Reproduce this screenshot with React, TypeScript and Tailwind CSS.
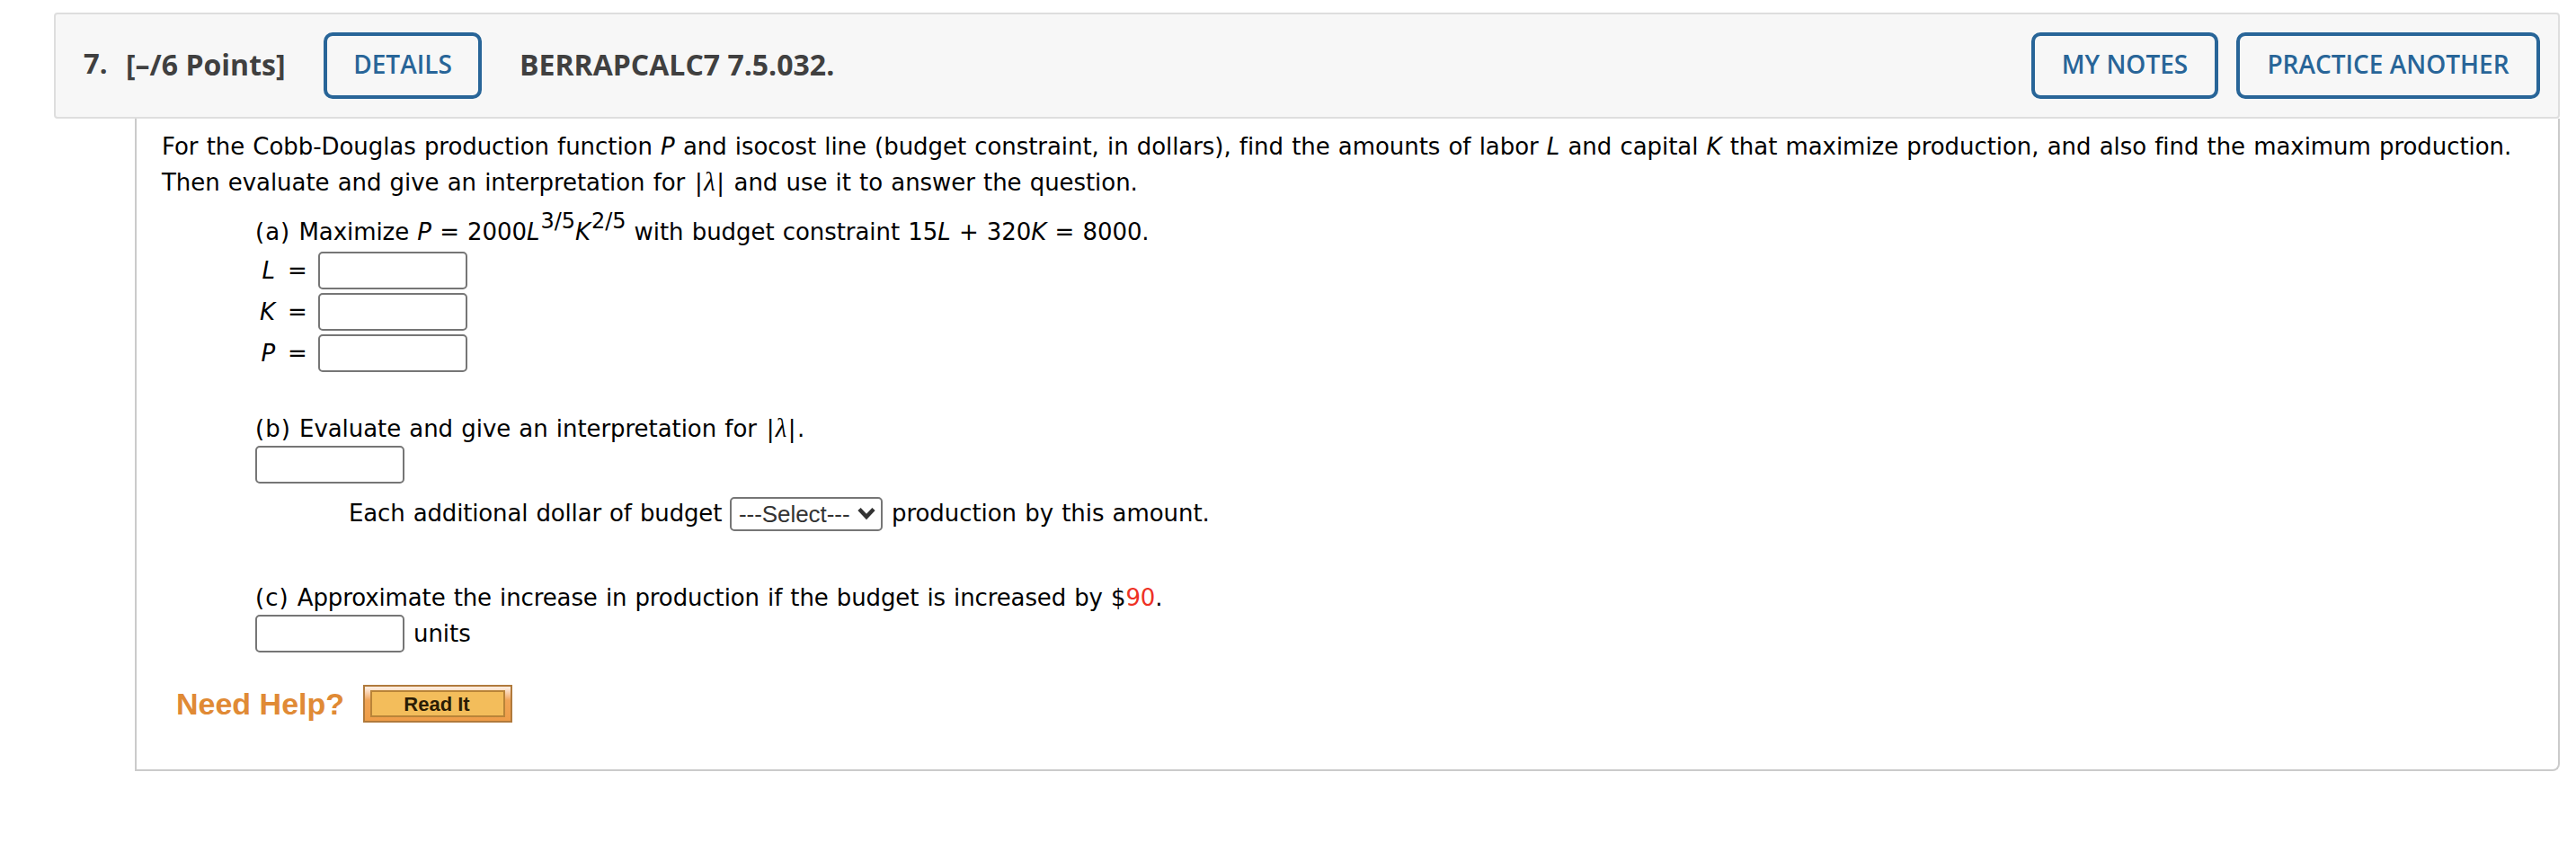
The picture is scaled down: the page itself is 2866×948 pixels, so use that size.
import { type FC, type ReactNode } from "react";

const HeaderButton: FC<{ label: string; className: string }> = ({
  label,
  className,
}) => {
  return (
    <button
      className={`flex h-[74px] items-center justify-center rounded-[10px] border-4 border-[#286598] pb-1 text-[28px] font-semibold whitespace-nowrap text-[#286598] ${className}`}
    >
      {label}
    </button>
  );
};

const AnswerBox: FC<{ label: string }> = ({ label }) => {
  return (
    <input
      aria-label={label}
      className="h-[42px] w-[166px] shrink-0 rounded-[5px] border-2 border-[#767676] bg-white px-1"
    />
  );
};

const PartLabel: FC<{ letter: string }> = ({ letter }) => (
  <span className="tracking-[1px]">({letter})</span>
);

const Lambda = () => (
  <>
    <span className="mx-[1.5px]">|</span>
    <i className="font-['Liberation_Serif',serif] text-[29px] leading-none">
      λ
    </i>
    <span className="mx-[1.5px]">|</span>
  </>
);

const Sup: FC<{ children: ReactNode }> = ({ children }) => (
  <span className="relative -top-[13px] ml-px text-[24px] leading-none">
    {children}
  </span>
);

const variables = ["L", "K", "P"];

const Header = () => {
  return (
    <div className="flex h-[118px] items-center rounded-[4px] border-2 border-[#dedede] bg-[#f7f7f7] pr-5 pl-[31px] font-['Open_Sans',sans-serif] text-[32px] font-bold text-[#404040]">
      <span className="w-[47px] pb-1.5 text-[31px]">7.</span>
      <span className="w-[220px] pb-0.5 whitespace-nowrap">[–/6 Points]</span>
      <HeaderButton label="DETAILS" className="w-[176px]" />
      <span className="ml-[42px] pb-0.5 whitespace-nowrap">
        BERRAPCALC7 7.5.032.
      </span>
      <div className="ml-auto flex gap-5">
        <HeaderButton label="MY NOTES" className="w-[208px]" />
        <HeaderButton label="PRACTICE ANOTHER" className="w-[338px]" />
      </div>
    </div>
  );
};

const Help = () => {
  return (
    <div className="mt-9 ml-4 flex h-[42px] items-center font-['Liberation_Sans',Arial,sans-serif] font-bold tracking-normal">
      <span className="w-[208px] text-[34px] whitespace-nowrap text-[#e08a35] [word-spacing:0px]">
        Need Help?
      </span>
      <button className="h-[42px] w-[166px] border-2 border-[#b07a3c] bg-linear-to-b from-[#fdeadb] from-5% via-[#f0a455] via-40% to-[#ef9d48] px-1.5 py-1">
        <span className="flex h-[30px] items-center justify-center border-2 border-[#b98438] bg-[#f3bd5b] pt-0.5 pr-0.5 text-[22px] text-[#2b1c05]">
          Read It
        </span>
      </button>
    </div>
  );
};

const Question = () => {
  return (
    <div className="ml-[90px] h-[726px] rounded-br-[8px] border-r-2 border-b-2 border-l-2 border-[#cbcbcb] pt-[11px] pl-7 font-['DejaVu_Sans',Verdana,sans-serif] text-[26px] leading-[40px] tracking-[-0.06px] whitespace-nowrap text-black [word-spacing:1px]">
      <p className="h-20">
        For the Cobb-Douglas production function <i>P</i> and isocost line
        (budget constraint, in dollars), find the amounts of labor <i>L</i> and
        capital <i>K</i> that maximize production, and also find the maximum
        production.
        <br />
        Then evaluate and give an interpretation for <Lambda /> and use it to
        answer the question.
      </p>

      <div className="mt-[15px] ml-[104px]">
        <p className="h-10">
          <PartLabel letter="a" /> Maximize <i>P</i> = 2000<i>L</i>
          <Sup>3/5</Sup>
          <i>K</i>
          <Sup>2/5</Sup> with budget constraint 15<i>L</i> + 320<i>K</i> = 8000.
        </p>
        {variables.map((name) => (
          <div key={name} className="flex h-[46px] items-center">
            <i className="w-[22px] text-right">{name}</i>
            <span className="ml-3.5 w-[34px]">=</span>
            <AnswerBox label={name} />
          </div>
        ))}

        <p className="mt-[41px] h-[39px]">
          <PartLabel letter="b" /> Evaluate and give an interpretation for{" "}
          <Lambda />.
        </p>
        <div className="flex">
          <AnswerBox label="lambda" />
        </div>
        <div className="mt-3.5 ml-[104px] flex h-[38px] items-center">
          <span className="w-[424px] tracking-[-0.15px]">
            Each additional dollar of budget
          </span>
          <div className="relative h-[38px] w-[170px]">
            <select className="h-full w-full appearance-none rounded-[5px] border-2 border-[#767676] bg-white pl-2 font-['Liberation_Sans',Arial,sans-serif] text-[26px] leading-[34px] text-[#333]">
              <option>---Select---</option>
            </select>
            <svg
              className="pointer-events-none absolute top-[12px] right-[8px]"
              width="20"
              height="15"
              viewBox="0 0 20 15"
              fill="none"
              stroke="#333"
              strokeWidth="4.5"
            >
              <path d="M2 2.5 L10 11 L18 2.5" />
            </svg>
          </div>
          <span className="ml-2.5">production by this amount.</span>
        </div>

        <p className="mt-[55px] h-[39px] tracking-[-0.12px]">
          <PartLabel letter="c" /> Approximate the increase in production if the
          budget is increased by $<span className="text-[#ee3124]">90</span>.
        </p>
        <div className="flex h-[42px] items-center">
          <AnswerBox label="units" />
          <span className="ml-2.5">units</span>
        </div>
      </div>

      <Help />
    </div>
  );
};

export default function App() {
  return (
    <div className="min-h-[948px] bg-white pt-3.5 pr-[18px] pl-[60px]">
      <Header />
      <Question />
    </div>
  );
}
